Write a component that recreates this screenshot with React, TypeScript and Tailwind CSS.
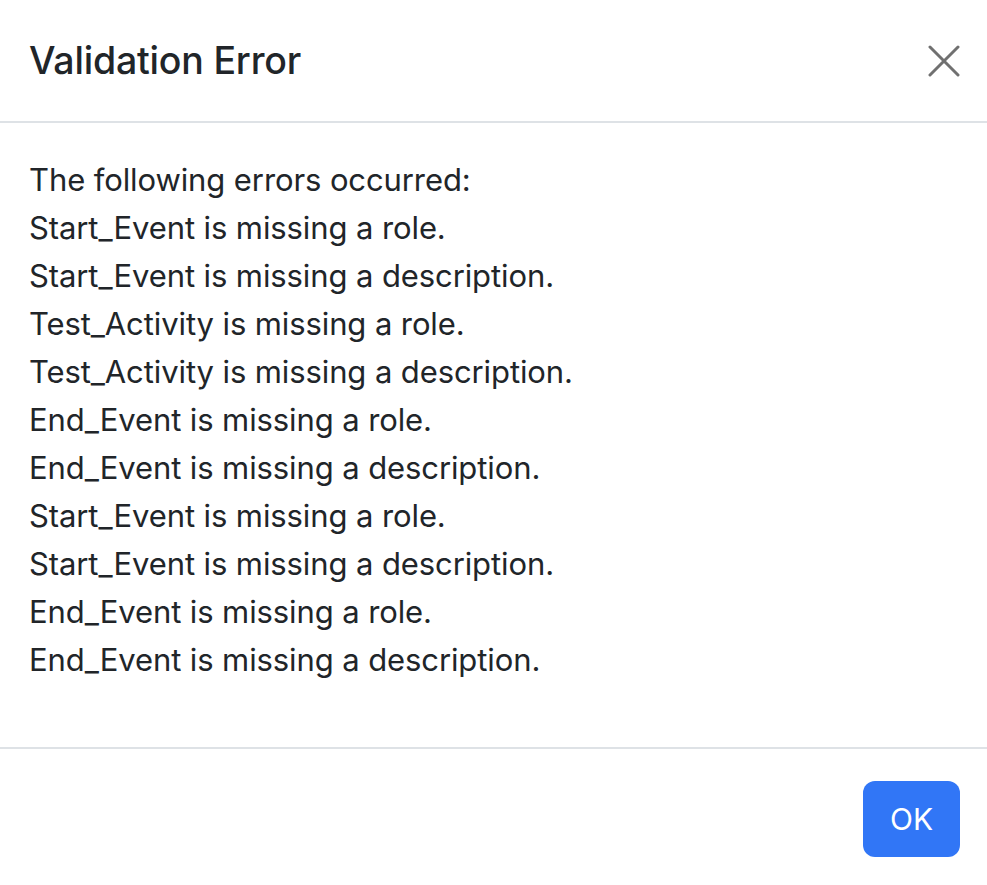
const errors = [
  "The following errors occurred:",
  "Start_Event is missing a role.",
  "Start_Event is missing a description.",
  "Test_Activity is missing a role.",
  "Test_Activity is missing a description.",
  "End_Event is missing a role.",
  "End_Event is missing a description.",
  "Start_Event is missing a role.",
  "Start_Event is missing a description.",
  "End_Event is missing a role.",
  "End_Event is missing a description.",
]

export default function App() {
  return (
    <div className="w-[987px] h-[885px] bg-white text-[#212529] font-['Inter','Liberation_Sans',sans-serif] flex flex-col">
      <div className="h-[123px] flex items-center justify-between pl-[29px] pr-[27px] border-b-2 border-[#dee2e6]">
        <h5 className="text-[37.5px] leading-[48px] font-medium tracking-[-0.2px]">Validation Error</h5>
        <button className="text-[#707070]">
          <svg width="32" height="32" viewBox="0 0 32 32" fill="none" stroke="currentColor" strokeWidth="3" strokeLinecap="round">
            <path d="M2 2L30 30M30 2L2 30" />
          </svg>
        </button>
      </div>
      <div className="pt-[33px] pb-[63px] pl-[29px] text-[31px] leading-[48px] tracking-[-0.1px]">
        {errors.map((e, i) => (
          <div key={i}>{e}</div>
        ))}
      </div>
      <div className="border-t-2 border-[#dee2e6] flex justify-end pt-[32px] pr-[27px]">
        <button className="w-[97px] h-[76px] rounded-[12px] bg-[#3176f6] text-white text-[30px]">OK</button>
      </div>
    </div>
  )
}
